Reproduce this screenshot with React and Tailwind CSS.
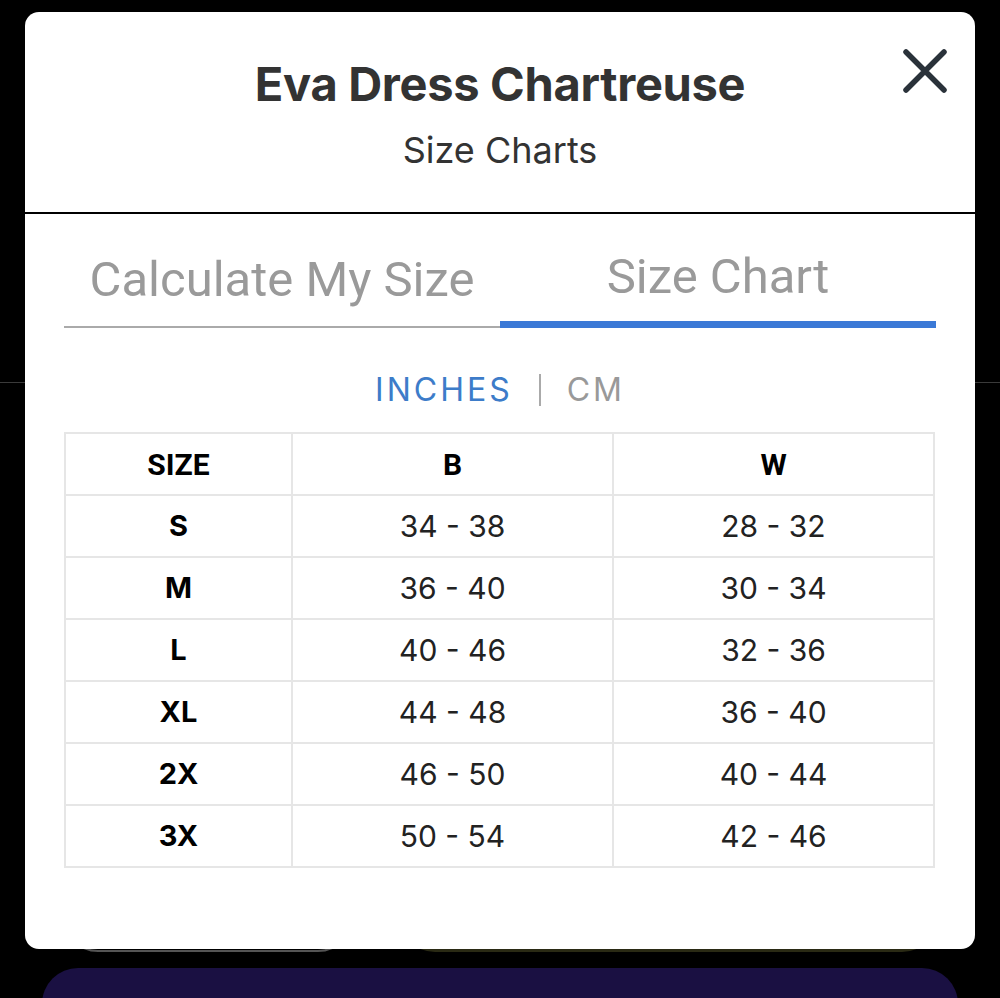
import { useState } from 'react';

const rows = [
    ['S', '34 - 38', '28 - 32'],
    ['M', '36 - 40', '30 - 34'],
    ['L', '40 - 46', '32 - 36'],
    ['XL', '44 - 48', '36 - 40'],
    ['2X', '46 - 50', '40 - 44'],
    ['3X', '50 - 54', '42 - 46'],
];

export default function App() {
    const [tab, setTab] = useState('chart');
    const [unit, setUnit] = useState('in');

    return (
        <div className="relative w-[1000px] h-[998px] bg-black overflow-hidden font-['Inter',sans-serif]">
            {/* page behind the modal */}
            <div className="flex flex-col">
                <div className="h-[382px]" />
                <div className="h-px bg-[#3a3a3a]" />
                <div className="h-[497px]" />
                <div className="flex gap-[45px] px-[62px]">
                    <div className="w-[292px] h-[72px] rounded-[36px] border-2 border-[#555]" />
                    <div className="flex-1 h-[72px] rounded-[36px] bg-[#2a2a14]" />
                </div>
                <div className="mx-[42px] mt-[16px] h-[120px] rounded-t-[36px] bg-[#1a1042]" />
            </div>

            {/* modal */}
            <div className="absolute left-[25px] top-[12px] w-[950px] h-[937px] bg-white rounded-[14px] flex flex-col">
                <div className="relative h-[202px] border-b-2 border-black flex flex-col items-center">
                    <h1 className="mt-[46px] text-[47px] leading-[52px] font-bold text-[#333] tracking-[-0.3px]">Eva Dress Chartreuse</h1>
                    <p className="mt-[18px] text-[36px] leading-[44px] text-[#333]">Size Charts</p>
                    <button className="absolute right-[26px] top-[36px] w-[48px] h-[48px] flex items-center justify-center">
                        <svg width="46" height="46" viewBox="0 0 46 46" fill="none" stroke="#2a323a" strokeWidth="5.5" strokeLinecap="round">
                            <path d="M4 3 L42 41 M42 3 L4 41" />
                        </svg>
                    </button>
                </div>

                <div className="mx-[39px] flex items-end font-['Roboto',sans-serif]">
                    <button
                        onClick={() => setTab('calc')}
                        className={`flex-1 h-[114px] pt-[19px] text-[49px] leading-[64px] text-[#9a9a9a] text-center ${tab === 'calc' ? 'border-b-[7px] border-[#3b79d6]' : 'border-b-2 border-[#aaa]'}`}
                    >
                        Calculate My Size
                    </button>
                    <button
                        onClick={() => setTab('chart')}
                        className={`flex-1 h-[114px] pt-[19px] text-[49px] leading-[64px] text-[#9a9a9a] text-center ${tab === 'chart' ? 'border-b-[7px] border-[#3b79d6]' : 'border-b-2 border-[#aaa]'}`}
                    >
                        Size Chart
                    </button>
                </div>

                <div className="mt-[42px] h-[40px] flex items-center justify-center text-[32px] leading-[40px] tracking-[3px]">
                    <button onClick={() => setUnit('in')} className={unit === 'in' ? 'text-[#3d7cc9]' : 'text-[#999]'}>INCHES</button>
                    <span className="mx-[26px] w-[2px] h-[32px] bg-[#aaa]" />
                    <button onClick={() => setUnit('cm')} className={unit === 'cm' ? 'text-[#3d7cc9]' : 'text-[#999]'}>CM</button>
                </div>

                <table className="mt-[22px] mx-[39px] w-[871px] border-collapse table-fixed">
                    <thead>
                        <tr className="h-[62px]">
                            <th className="w-[227px] border-2 border-[#e6e6e6] text-[30px] font-bold text-black font-['Roboto',sans-serif]">SIZE</th>
                            <th className="border-2 border-[#e6e6e6] text-[30px] font-bold text-black font-['Roboto',sans-serif]">B</th>
                            <th className="border-2 border-[#e6e6e6] text-[30px] font-bold text-black font-['Roboto',sans-serif]">W</th>
                        </tr>
                    </thead>
                    <tbody>
                        {rows.map(([size, b, w]) => (
                            <tr key={size} className="h-[62px]">
                                <td className="border-2 border-[#e6e6e6] text-center text-[29px] font-bold text-black">{size}</td>
                                <td className="border-2 border-[#e6e6e6] text-center text-[30px] text-[#222]">{b}</td>
                                <td className="border-2 border-[#e6e6e6] text-center text-[30px] text-[#222]">{w}</td>
                            </tr>
                        ))}
                    </tbody>
                </table>
            </div>
        </div>
    );
}
